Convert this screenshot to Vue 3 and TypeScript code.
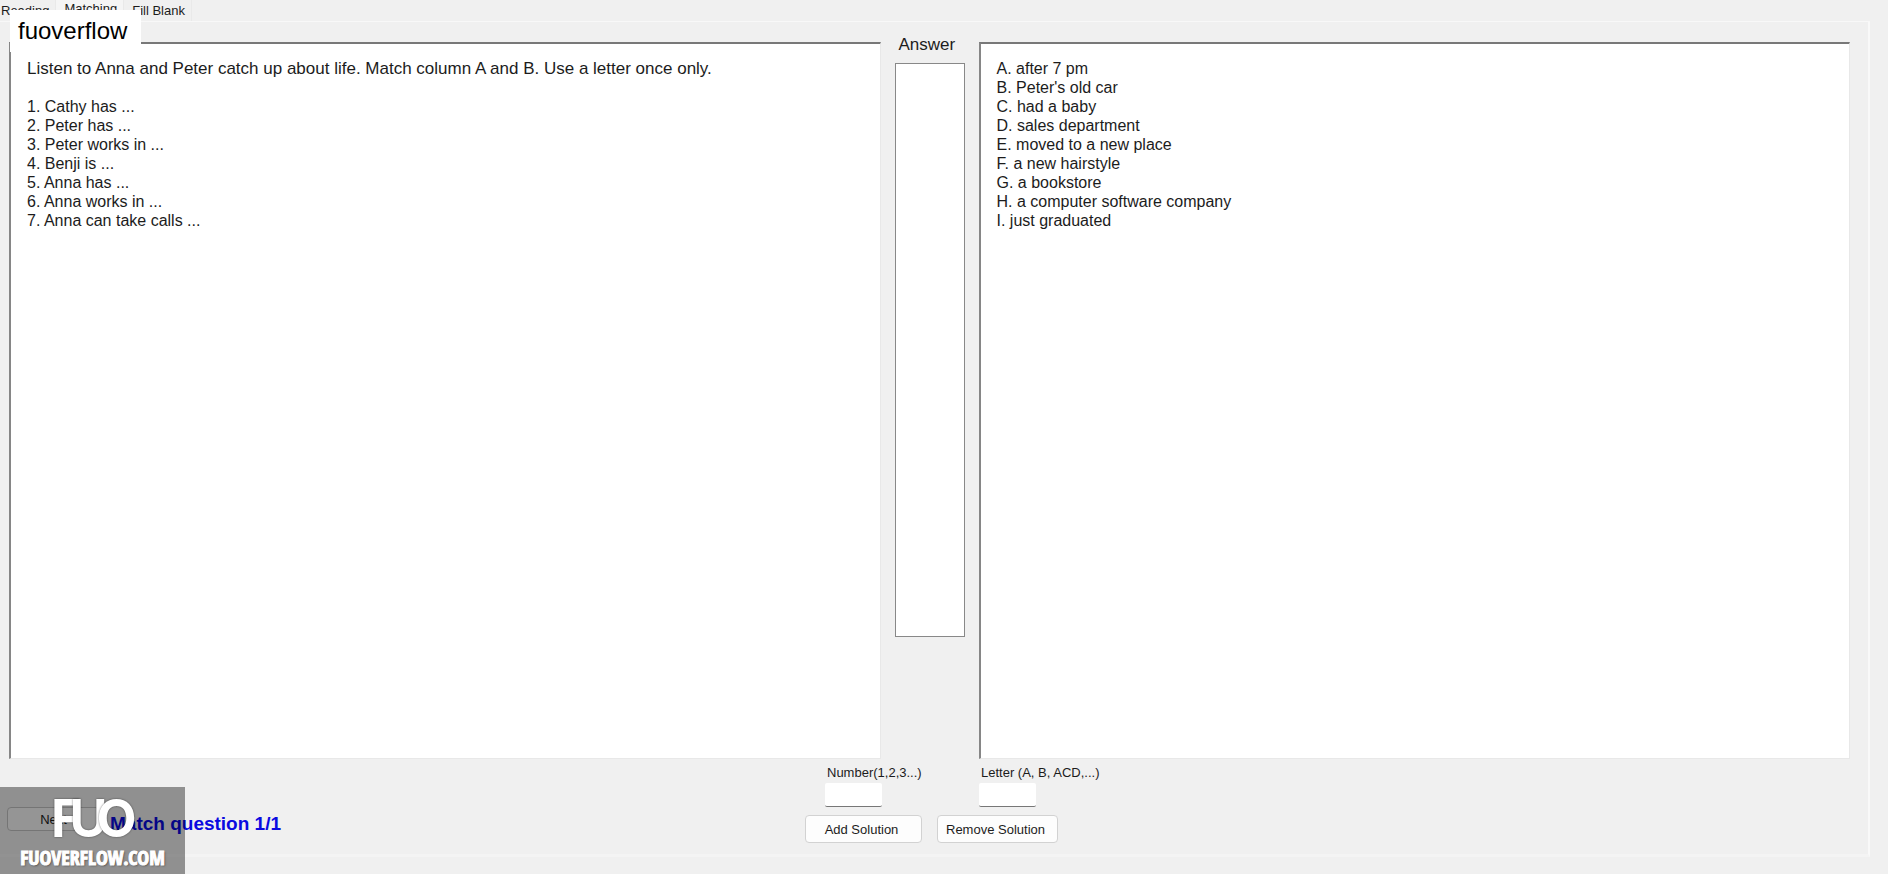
<script setup lang="ts">
import { ref } from 'vue'

const tabs = ['Reading', 'Matching', 'Fill Blank']
const active = ref('Matching')

const instruction =
  'Listen to Anna and Peter catch up about life. Match column A and B. Use a letter once only.'
const columnA = [
  '1. Cathy has ...',
  '2. Peter has ...',
  '3. Peter works in ...',
  '4. Benji is ...',
  '5. Anna has ...',
  '6. Anna works in ...',
  '7. Anna can take calls ...',
]
const columnB = [
  'A. after 7 pm',
  "B. Peter's old car",
  'C. had a baby',
  'D. sales department',
  'E. moved to a new place',
  'F. a new hairstyle',
  'G. a bookstore',
  'H. a computer software company',
  'I. just graduated',
]

const numberValue = ref('')
const letterValue = ref('')
const solutions = ref<string[]>([])

function addSolution() {
  if (numberValue.value && letterValue.value) {
    solutions.value.push(`${numberValue.value}-${letterValue.value}`)
  }
}
function removeSolution() {
  solutions.value = solutions.value.filter((s) => !s.startsWith(`${numberValue.value}-`))
}
</script>

<template>
  <div class="window">
    <nav class="tabs" role="tablist">
      <button
        v-for="tab in tabs"
        :key="tab"
        type="button"
        role="tab"
        class="tab"
        :class="{ active: tab === active }"
        :aria-selected="tab === active"
        @click="active = tab"
      >
        {{ tab }}
      </button>
    </nav>

    <main class="page">
      <div class="columns">
        <section class="panel">
          <p class="instruction">{{ instruction }}</p>
          <p v-for="line in columnA" :key="line">{{ line }}</p>
        </section>

        <div class="answer">
          <label for="answers">Answer</label>
          <select id="answers" size="4">
            <option v-for="s in solutions" :key="s">{{ s }}</option>
          </select>
        </div>

        <section class="panel">
          <p v-for="line in columnB" :key="line">{{ line }}</p>
        </section>
      </div>

      <footer class="footer">
        <div class="progress">
          <button type="button" class="next">Next</button>
          <strong>Match question 1/1</strong>
        </div>
        <div class="controls">
          <div class="field number">
            <label for="number">Number(1,2,3...)</label>
            <input id="number" v-model="numberValue" type="text" />
          </div>
          <div class="field letter">
            <label for="letter">Letter (A, B, ACD,...)</label>
            <input id="letter" v-model="letterValue" type="text" />
          </div>
          <button type="button" class="action" @click="addSolution">Add Solution</button>
          <button type="button" class="action" @click="removeSolution">Remove Solution</button>
        </div>
      </footer>
    </main>

    <div class="tag">fuoverflow</div>

    <div class="watermark">
      <div class="logo"><span>F</span><span class="u">U</span><span class="o">O</span></div>
      <div class="site">FUOVERFLOW.COM</div>
    </div>
  </div>
</template>

<style>
body {
  margin: 0;
  background: #f0f0f0;
}
</style>

<style scoped>
.window {
  position: relative;
  display: flex;
  flex-direction: column;
  box-sizing: border-box;
  min-height: 100vh;
  padding: 0 18px 17px 0;
  background: #f0f0f0;
  color: #1c1c1c;
  font-family: 'Liberation Sans', Arial, sans-serif;
  font-size: 13px;
  overflow: hidden;
}
button,
input,
select {
  box-sizing: border-box;
  margin: 0;
  font: inherit;
  color: inherit;
}
.tabs {
  display: flex;
  height: 21px;
}
.tab {
  padding: 0 6px 0 8px;
  border: 0;
  border-right: 1px solid #e9e9e9;
  background: transparent;
  line-height: 20px;
  text-align: left;
}
.tab:first-child {
  padding-left: 1px;
}
.tab.active {
  padding-bottom: 4px;
  background: #f5f5f5;
  line-height: 16px;
}
.page {
  display: flex;
  flex: 1;
  flex-direction: column;
  border-top: 1px solid #f8f8f8;
  border-right: 2px solid #f9f9f9;
  border-bottom: 3px solid #f4f4f4;
}
.columns {
  display: grid;
  flex: 1;
  grid-template-columns: minmax(0, 1fr) 70px minmax(0, 1fr);
  gap: 14px;
  padding: 20px 18px 0 9px;
}
.panel {
  box-sizing: border-box;
  padding: 15px 16px;
  border: 2px solid;
  border-color: #787878 #e8e8e8 #e8e8e8 #868686;
  border-right-width: 1px;
  border-bottom-width: 1px;
  background: #fff;
  font-size: 16px;
  line-height: 19px;
}
.panel p {
  margin: 0;
}
.panel .instruction {
  margin-bottom: 19px;
  font-size: 17px;
}
.answer {
  display: flex;
  flex-direction: column;
  font-size: 17px;
}
.answer label {
  height: 21px;
  padding-left: 4px;
  line-height: 6px;
}
.answer select {
  height: 574px;
  padding: 0;
  border: 1px solid #888;
  border-radius: 0;
  background: #fff;
  overflow: auto;
}
.footer {
  display: grid;
  grid-template-columns: minmax(0, 1fr) auto minmax(0, 1fr);
  padding: 4px 12px 11px 7px;
}
.progress {
  display: flex;
  align-items: flex-start;
  gap: 10px;
  padding-top: 44px;
}
.progress strong {
  color: #0a0ae0;
  font-size: 19px;
  line-height: 34px;
  white-space: nowrap;
}
.next {
  width: 93px;
  height: 24px;
  padding: 0 6px;
  border: 1px solid #c4c4c4;
  border-radius: 4px;
  background: #f8f8f8;
}
.controls {
  display: grid;
  grid-template-columns: 117px 121px;
  gap: 8px 15px;
}
.field {
  display: flex;
  flex-direction: column;
  align-items: flex-start;
  white-space: nowrap;
}
.field.number {
  padding-left: 20px;
}
.field.letter {
  padding-left: 42px;
}
.field label {
  padding-left: 2px;
  line-height: 20px;
}
.field input {
  width: 57px;
  height: 24px;
  padding: 0 4px;
  border: 0;
  border-bottom: 1px solid #777;
  border-radius: 2px;
  background: #fff;
}
.action {
  height: 28px;
  padding: 0 4px 0 0;
  border: 1px solid #d2d2d2;
  border-radius: 4px;
  background: #fdfdfd;
  white-space: nowrap;
}
.tag {
  position: absolute;
  top: 10px;
  left: 10px;
  padding: 0 14px 0 8px;
  background: #fff;
  color: #000;
  font-size: 24px;
  line-height: 42px;
}
.watermark {
  position: absolute;
  bottom: 0;
  left: 0;
  width: 185px;
  height: 87px;
  background: rgba(0, 0, 0, 0.4);
  color: #fff;
}
.logo {
  display: flex;
  padding: 7px 0 0 51px;
  font-family: Inter, sans-serif;
  font-size: 52px;
  font-weight: 700;
  line-height: 50px;
  text-shadow: 0 0 2px rgba(0, 0, 0, 0.6);
}
.logo .u {
  margin-left: -12px;
}
.logo .o {
  margin-left: -11px;
}
.site {
  font-family: 'Liberation Sans Narrow', 'Open Sans Condensed', 'DejaVu Sans Condensed', sans-serif;
  font-size: 20px;
  font-weight: 700;
  line-height: 28px;
  text-align: center;
  text-shadow: 1px 1px 2px rgba(0, 0, 0, 0.5);
  -webkit-text-stroke: 1px #fff;
}
</style>
